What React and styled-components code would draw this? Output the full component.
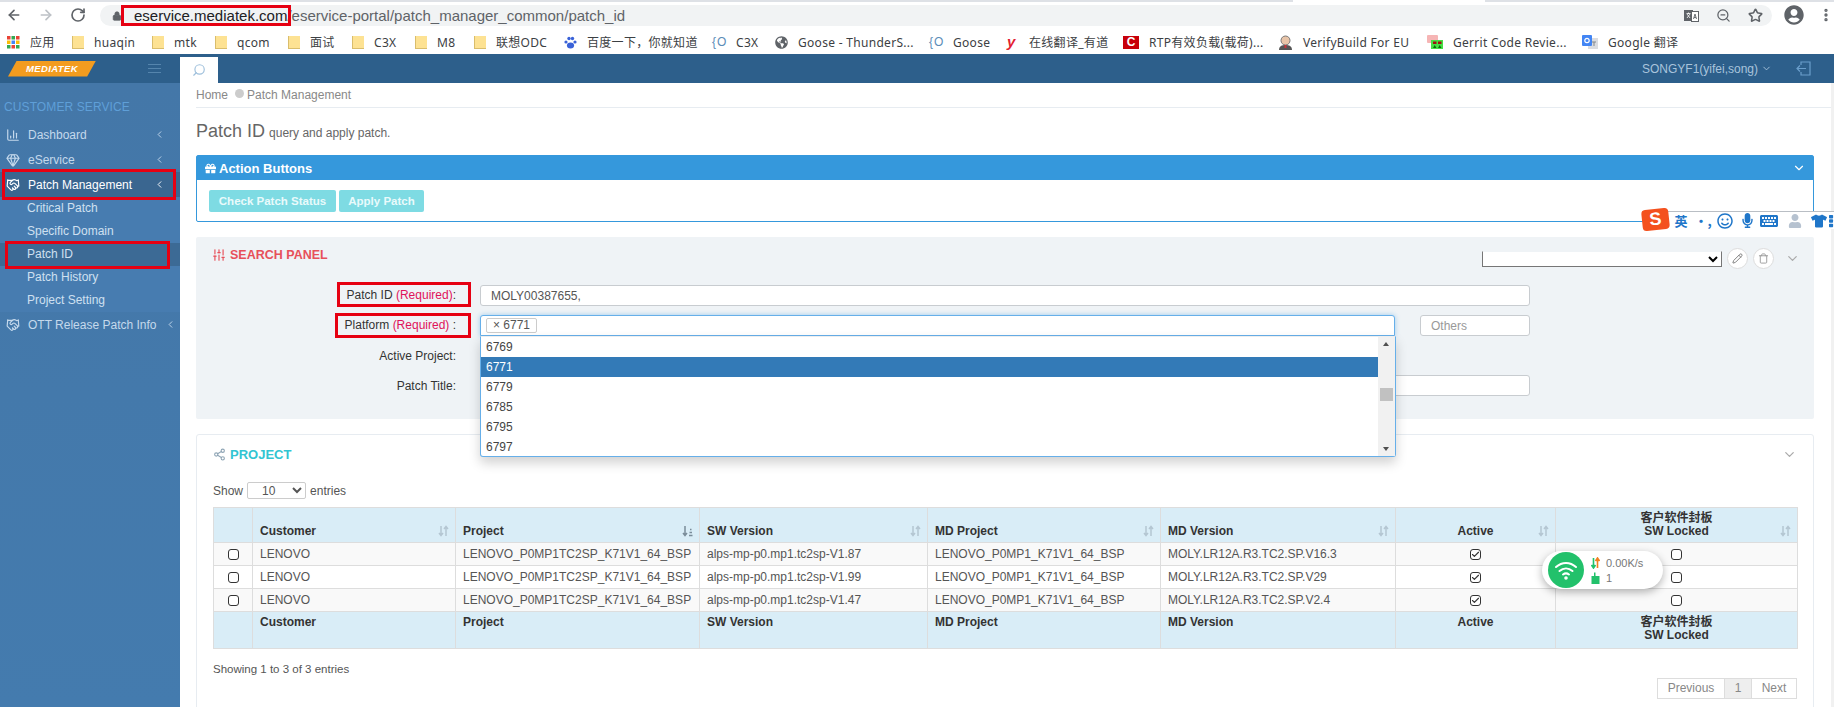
import React from 'react';
import styled, { createGlobalStyle, css } from 'styled-components';
import {
  ArrowLeft, ArrowRight, RotateCw, Lock, Star, ZoomOut,
  EllipsisVertical, Search, ChevronDown, ChevronLeft, ChartColumn, Gem, Handshake,
  SlidersVertical, Share2, Pencil, Trash, Check,
} from 'lucide-react';
import { FaGift, FaGlobeAmericas, FaRegSmile, FaMicrophone, FaKeyboard, FaUser, FaTshirt, FaTh, FaUserCircle } from 'react-icons/fa';

const GlobalStyle = createGlobalStyle`
  html, body { margin: 0; padding: 0; background: #fff; }
  body { font-family: "Liberation Sans", Arial, "Noto Sans CJK SC", sans-serif; font-size: 12px; color: #333; }
  * { box-sizing: border-box; }
`;

const redBox = css`
  position: relative;
  &::after {
    content: '';
    position: absolute;
    inset: ${({ $inset }) => $inset};
    border: 3px solid #e60012;
    pointer-events: none;
  }
`;

const Page = styled.div`
  position: relative;
  display: flex;
  flex-direction: column;
  width: 1834px;
  height: 707px;
  overflow: hidden;
`;

/* browser chrome */
const TabStrip = styled.div`
  flex: 0 0 2px;
  display: flex;
  background: #dee1e6;
`;

const ActiveTab = styled.div`
  width: 192px;
  margin-left: 1293px;
  background: #fff;
`;

const Toolbar = styled.div`
  flex: 0 0 28px;
  display: flex;
  align-items: flex-start;
  padding: 3px 0 0 6px;
`;

const NavIcons = styled.div`
  display: flex;
  gap: 16px;
  padding-top: 2px;
  svg { display: block; }
`;

const AddressBar = styled.div`
  display: flex;
  align-items: center;
  width: 1675px;
  height: 21px;
  margin-left: 14px;
  padding: 0 9px 0 12px;
  border-radius: 11px;
  background: #f1f3f4;
`;

const Url = styled.div`
  flex: 1;
  margin-left: 12px;
  font-size: 15px;
  color: #5f6368;
  white-space: nowrap;
`;

const Domain = styled.span`
  ${redBox}
  display: inline-block;
  color: #202124;
`;

const BarIcons = styled.div`
  display: flex;
  gap: 17px;
  align-items: center;
`;

const Profile = styled.div`
  display: flex;
  align-items: center;
  gap: 14px;
  margin-left: 12px;
`;

const Bookmarks = styled.div`
  flex: 0 0 24px;
  display: flex;
  align-items: center;
  gap: 18px;
  padding-left: 7px;
`;

const Bookmark = styled.div`
  display: flex;
  align-items: center;
  gap: 10px;
`;

const BookmarkLabel = styled.span`
  width: ${({ $w }) => $w}px;
  font-family: "Noto Sans", "Noto Sans CJK SC", sans-serif;
  font-size: 12px;
  letter-spacing: 0.3px;
  color: #3c4043;
  white-space: nowrap;
`;

const Folder = styled.span`
  width: 12px;
  height: 13px;
  background: #fde293;
  border-left: 1px solid #d9bd6c;
  border-bottom: 1px solid #d9bd6c;
`;

const FavBrace = styled.span`
  width: 14px;
  font-size: 12px;
  letter-spacing: 1px;
  color: #5b8db8;
  white-space: nowrap;
`;

const FavYoudao = styled.span`
  width: 12px;
  font-size: 15px;
  line-height: 14px;
  font-weight: 700;
  font-style: italic;
  color: #e3212f;
`;

const FavRed = styled.span`
  width: 16px;
  height: 13px;
  font-size: 12px;
  line-height: 13px;
  font-weight: 700;
  text-align: center;
  color: #fff;
  background: #c8000a;
`;

/* app header */
const TopBar = styled.header`
  flex: 0 0 29px;
  display: flex;
  align-items: flex-end;
  background: #2d5f8b;
`;

const LogoArea = styled.div`
  display: flex;
  align-items: center;
  justify-content: space-between;
  width: 180px;
  height: 100%;
  padding: 0 19px 0 8px;
`;

const Logo = styled.div`
  width: 88px;
  height: 16px;
  font-size: 9.5px;
  line-height: 16px;
  font-weight: 700;
  font-style: italic;
  letter-spacing: 0.4px;
  text-align: center;
  color: #fff;
  background: #f39c1f;
  clip-path: polygon(10% 0, 100% 0, 90% 100%, 0 100%);
`;

const Burger = styled.div`
  width: 13px;
  height: 9px;
  border-top: 1px solid #5585ad;
  border-bottom: 1px solid #5585ad;
  background: linear-gradient(#5585ad, #5585ad) center / 100% 1px no-repeat;
`;

const SearchTab = styled.div`
  display: flex;
  align-items: center;
  justify-content: center;
  width: 38px;
  height: 26px;
  background: #fff;
  svg { transform: scaleX(-1); }
`;

const UserMenu = styled.div`
  display: flex;
  align-items: center;
  align-self: center;
  margin-left: auto;
  padding-right: 23px;
  font-size: 12px;
  color: #a9c4dc;
`;

const LogoutBox = styled.span`
  display: flex;
  margin-left: 24px;
`;

const Body = styled.div`
  flex: 1;
  display: flex;
  min-height: 0;
`;

/* sidebar */
const Sidebar = styled.nav`
  flex: 0 0 180px;
  min-width: 0;
  background: linear-gradient(#4477a8, #447bae);
`;

const SideHeading = styled.div`
  height: 39px;
  padding: 16px 0 0 4px;
  font-size: 12px;
  line-height: 17px;
  letter-spacing: 0.1px;
  color: #5f9fd8;
`;

const NavRow = styled.div`
  ${({ $inset }) => $inset && redBox}
  display: flex;
  align-items: center;
  gap: 8px;
  height: 25px;
  padding-left: 6px;
  font-size: 12px;
  white-space: nowrap;
  color: ${({ $active }) => ($active ? '#fff' : '#c5d9ec')};
  background: ${({ $active }) => ($active ? '#3a6690' : 'transparent')};
`;

const NavIcon = styled.span`
  display: flex;
  width: 14px;
`;

const NavArrow = styled.span`
  display: flex;
  margin-left: auto;
  margin-right: 15px;
`;

const SubMenu = styled.div`
  background: #477cb0;
`;

const SubItem = styled.div`
  ${({ $inset }) => $inset && redBox}
  height: 23px;
  padding-left: 27px;
  font-size: 12px;
  line-height: 23px;
  color: #cfe0f0;
  background: ${({ $active }) => ($active ? '#3c6a95' : 'transparent')};
`;

/* content */
const Main = styled.main`
  flex: 1;
  min-width: 0;
  padding: 0 17px 0 16px;
  border-right: 3px solid #f1f1f1;
`;

const Breadcrumb = styled.div`
  display: flex;
  align-items: center;
  height: 25px;
  margin-right: -17px;
  border-bottom: 1px solid #e7ecf1;
  font-size: 12px;
  color: #888;
`;

const CrumbDot = styled.span`
  width: 9px;
  height: 9px;
  margin: -4px 3px 0 7px;
  border-radius: 50%;
  background: #ccc;
`;

const TitleRow = styled.div`
  display: flex;
  align-items: baseline;
  gap: 4px;
  height: 47px;
  padding-top: 13px;
`;

const Title = styled.h1`
  margin: 0;
  font-size: 18px;
  font-weight: 400;
  color: #666;
`;

const TitleNote = styled.small`
  font-size: 12px;
  color: #666;
`;

const ActionPanel = styled.section`
  height: 67px;
  border: 1px solid #3598dc;
  border-radius: 2px;
`;

const ActionHead = styled.div`
  display: flex;
  align-items: center;
  gap: 3px;
  height: 24px;
  padding-left: 8px;
  font-size: 13px;
  font-weight: 700;
  color: #fff;
  background: #3598dc;
`;

const HeadChevron = styled.span`
  display: flex;
  margin-left: auto;
  margin-right: ${({ $right }) => $right}px;
`;

const ActionBody = styled.div`
  display: flex;
  gap: 3px;
  padding: 10px 12px;
`;

const ActionButton = styled.button`
  width: ${({ $w }) => $w}px;
  height: 22px;
  padding: 0;
  border: 0;
  border-radius: 2px;
  font-family: inherit;
  font-size: 11.5px;
  font-weight: 700;
  color: #e9fafb;
  background: #7edbe3;
`;

const SearchPanel = styled.section`
  height: 182px;
  margin-top: 15px;
  border-radius: 2px;
  background: #eff3f6;
`;

const SearchHead = styled.div`
  display: flex;
  align-items: flex-start;
  height: 48px;
  padding: 11px 14px 0 16px;
`;

const PanelTitle = styled.div`
  display: flex;
  align-items: center;
  gap: 4px;
  height: 14px;
  font-size: ${({ $size = 12 }) => $size}px;
  font-weight: 700;
  color: ${({ $color }) => $color};
`;

const PresetTools = styled.div`
  display: flex;
  align-items: center;
  gap: 5px;
  margin-left: auto;
`;

const PresetSelect = styled.select`
  width: 240px;
  height: 16px;
  padding: 0;
  border: 1px solid #767676;
  border-top-color: #eff3f6;
  border-radius: 0;
  background: #fff;
`;

const RoundButton = styled.span`
  display: flex;
  align-items: center;
  justify-content: center;
  width: 21px;
  height: 21px;
  border: 1px solid #ddd;
  border-radius: 50%;
  background: #fff;
`;

const CollapseIcon = styled.span`
  display: flex;
  margin-left: 6px;
`;

const FormGrid = styled.div`
  display: flex;
  flex-direction: column;
  gap: 9px;
`;

const FormRow = styled.div`
  display: flex;
  align-items: center;
  height: 21px;
`;

const FieldLabel = styled.div`
  width: 260px;
  margin-right: 24px;
  font-size: 12px;
  text-align: right;
  color: #333;
`;

const LabelText = styled.span`
  ${({ $inset }) => $inset && redBox}
  display: inline-block;
  line-height: 21px;
`;

const Required = styled.span`
  color: #e0125a;
`;

const TextInput = styled.input`
  width: ${({ $w }) => $w}px;
  height: 21px;
  margin-left: ${({ $left = 0 }) => $left}px;
  padding: 0 10px;
  border: 1px solid #c8ccd0;
  border-radius: 3px;
  outline: none;
  font-family: inherit;
  font-size: 12px;
  color: #555;
  background: #fff;
  &::placeholder { color: #999; }
`;

const SelectBox = styled.div`
  position: relative;
  display: flex;
  align-items: center;
  width: 915px;
  height: 21px;
  padding-left: 5px;
  border: 1px solid #66afe9;
  border-radius: 3px 3px 0 0;
  background: #fff;
  box-shadow: 0 0 5px rgba(102, 175, 233, 0.6);
`;

const Tag = styled.span`
  padding: 0 6px;
  height: 15px;
  border: 1px solid #ccc;
  border-radius: 2px;
  font-size: 12px;
  line-height: 13px;
  color: #555;
  background: #fff;
`;

const Dropdown = styled.div`
  position: absolute;
  z-index: 5;
  top: 20px;
  left: -1px;
  display: flex;
  width: 916px;
  height: 121px;
  border: 1px solid #66afe9;
  border-top: 1px solid #eee;
  border-radius: 0 0 3px 3px;
  background: #fff;
  box-shadow: 0 6px 12px rgba(0, 0, 0, 0.18);
`;

const OptionList = styled.div`
  flex: 1;
  overflow: hidden;
`;

const Option = styled.div`
  height: 20px;
  padding-left: 5px;
  font-size: 12px;
  line-height: 20px;
  color: ${({ $selected }) => ($selected ? '#fff' : '#444')};
  background: ${({ $selected }) => ($selected ? '#337ab7' : 'transparent')};
`;

const FakeScrollbar = styled.div`
  position: relative;
  flex: 0 0 17px;
  background: #f1f1f1;
`;

const ScrollArrow = styled.span`
  position: absolute;
  left: 5px;
  ${({ $down }) => ($down ? 'bottom: 5px; border-top: 4px solid #505050;' : 'top: 5px; border-bottom: 4px solid #505050;')}
  border-left: 3px solid transparent;
  border-right: 3px solid transparent;
`;

const ScrollThumb = styled.span`
  position: absolute;
  top: 51px;
  left: 2px;
  width: 13px;
  height: 13px;
  background: #c1c1c1;
`;

const ProjectPanel = styled.section`
  margin-top: 15px;
  height: 290px;
  padding: 0 16px;
  border: 1px solid #e7ecf1;
  border-radius: 3px;
`;

const ProjectHead = styled.div`
  display: flex;
  align-items: center;
  height: 38px;
`;

const LengthRow = styled.div`
  display: flex;
  align-items: center;
  gap: 4px;
  height: 17px;
  margin: 9px 0 8px;
  font-size: 12px;
  color: #555;
`;

const LengthSelect = styled.select`
  width: 59px;
  height: 17px;
  padding: 0 0 0 10px;
  border: 1px solid #ccc;
  border-radius: 2px;
  font-family: inherit;
  font-size: 12px;
  color: #555;
  background: #fff;
`;

const Table = styled.table`
  width: 1584px;
  table-layout: fixed;
  border-collapse: collapse;
  font-size: 12px;
`;

const HeadCell = styled.th`
  position: relative;
  height: ${({ $foot }) => ($foot ? 37 : 35)}px;
  padding: ${({ $foot }) => ($foot ? '4px 7px 0' : '0 7px 4px')};
  border: 1px solid #ddd;
  vertical-align: ${({ $foot }) => ($foot ? 'top' : 'bottom')};
  font-size: 12px;
  line-height: 13px;
  text-align: ${({ $center }) => ($center ? 'center' : 'left')};
  color: #333;
  background: #d9edf7;
`;

const SortMark = styled.span`
  position: absolute;
  right: 6px;
  bottom: 5px;
  display: flex;
`;

const Row = styled.tr`
  height: 23px;
  background: ${({ $odd }) => ($odd ? '#f9f9f9' : '#fff')};
`;

const Cell = styled.td`
  padding: 0 7px;
  border: 1px solid #ddd;
  color: #555;
  text-align: ${({ $center }) => ($center ? 'center' : 'left')};
  white-space: nowrap;
  overflow: hidden;
`;

const Tick = styled.span`
  display: inline-flex;
  align-items: center;
  justify-content: center;
  width: 11px;
  height: 11px;
  vertical-align: middle;
  border: 1.5px solid #333;
  border-radius: 3px;
  background: #fff;
`;

const TableInfo = styled.div`
  height: 15px;
  margin-top: 14px;
  font-size: 11.5px;
  color: #555;
`;

const Pager = styled.div`
  display: flex;
  justify-content: flex-end;
`;

const PageLink = styled.span`
  width: ${({ $w }) => $w}px;
  height: 21px;
  border: 1px solid #ddd;
  margin-left: -1px;
  font-size: 12px;
  line-height: 19px;
  text-align: center;
  color: #888;
  background: ${({ $current }) => ($current ? '#eee' : '#fff')};
`;

/* floating windows widgets */
const ImeBar = styled.div`
  position: absolute;
  z-index: 10;
  top: 211px;
  left: 1665px;
  display: flex;
  align-items: center;
  width: 169px;
  height: 18px;
  padding-left: 5px;
  border-top: 1px solid #b9bec4;
  background: #fff;
  color: #1f76c9;
`;

const ImeSlot = styled.span`
  flex: 0 0 ${({ $w = 22 }) => $w}px;
  display: flex;
  justify-content: center;
`;

const ImeLogo = styled.span`
  position: absolute;
  z-index: 11;
  top: 209px;
  left: 1642px;
  width: 27px;
  height: 21px;
  border-radius: 4px;
  font-size: 18px;
  line-height: 21px;
  font-weight: 700;
  text-align: center;
  color: #fff;
  background: #f4511e;
  transform: rotate(-6deg);
`;

const ImeText = styled.span`
  font-size: 13px;
  font-weight: 700;
  line-height: 16px;
  font-family: "Noto Sans CJK SC", sans-serif;
  white-space: nowrap;
`;

const NetWidget = styled.div`
  position: absolute;
  z-index: 8;
  top: 551px;
  left: 1542px;
  display: flex;
  align-items: center;
  gap: 7px;
  width: 121px;
  height: 38px;
  padding-left: 6px;
  border-radius: 19px;
  background: #fff;
  box-shadow: 0 3px 8px rgba(0, 0, 0, 0.3);
`;

const WifiDisc = styled.span`
  display: flex;
  align-items: center;
  justify-content: center;
  width: 36px;
  height: 36px;
  border-radius: 50%;
  background: #22c16b;
`;

const NetStats = styled.div`
  display: flex;
  flex-direction: column;
  gap: 3px;
  font-size: 11px;
  line-height: 12px;
  color: #777;
`;

const NetLine = styled.div`
  display: flex;
  align-items: center;
  gap: 6px;
`;

const AppsIcon = () => (
  <svg width="13" height="13" viewBox="0 0 13 13">
    {[0, 1, 2].flatMap((r) =>
      [0, 1, 2].map((c) => (
        <rect key={`${r}${c}`} x={c * 4.5} y={r * 4.5} width="3.5" height="3.5"
          fill={['#ea4335', '#fbbc05', '#34a853', '#4285f4'][(r + c * 2) % 4]} />
      ))
    )}
  </svg>
);

const PawIcon = () => (
  <svg width="13" height="13" viewBox="0 0 13 13" fill="#3a62d8">
    <circle cx="2" cy="6" r="1.6" /><circle cx="5" cy="2.5" r="1.7" /><circle cx="8.5" cy="2.5" r="1.7" />
    <circle cx="11" cy="6" r="1.6" /><ellipse cx="6.5" cy="9.5" rx="3.6" ry="3" />
  </svg>
);

const JenkinsIcon = () => (
  <svg width="15" height="15" viewBox="0 0 15 15">
    <path d="M1 15c0-4 3-5 6.500-5s6.500 1 6.500 5z" fill="#555" />
    <circle cx="7.500" cy="5.500" r="4.500" fill="#e8c4a8" stroke="#777" />
    <rect x="6.500" y="10" width="2" height="3" fill="#c8333a" />
  </svg>
);

const GerritIcon = () => (
  <svg width="16" height="14" viewBox="0 0 16 14">
    <rect x="0" y="0" width="11" height="8" rx="1" fill="#f6b5b5" />
    <rect x="4" y="5" width="12" height="9" fill="#44e044" />
    <rect x="6" y="6.500" width="3.500" height="2.500" fill="#a01010" />
    <rect x="11" y="6.500" width="3.500" height="2.500" fill="#a01010" />
    <path d="M6 13l1.700-3 1.800 3zM11 13l1.700-3 1.800 3z" fill="#0a6a0a" />
  </svg>
);

const TranslateIcon = () => (
  <svg width="16" height="14" viewBox="0 0 16 14">
    <rect x="6" y="3" width="10" height="11" fill="#dadce0" />
    <rect x="0" y="0" width="10" height="11" rx="1" fill="#4285f4" />
    <circle cx="5" cy="5.500" r="2.200" fill="none" stroke="#fff" strokeWidth="1.200" />
    <path d="M10 7h4M12 7v4" stroke="#80868b" />
  </svg>
);

const PageTranslateIcon = () => (
  <svg width="15" height="14" viewBox="0 0 15 14">
    <rect x="0.500" y="1.500" width="8" height="10" fill="#5f6368" stroke="#5f6368" />
    <rect x="7.500" y="2.500" width="7" height="10" fill="#fff" stroke="#5f6368" />
    <path d="M2.500 4.500h4M4.500 3.500v1.500M3 9l3-4M6 9L3 5" stroke="#fff" strokeWidth="0.800" fill="none" />
    <path d="M9.500 10l1.500-5 1.500 5M10 8.500h2" stroke="#5f6368" strokeWidth="0.900" fill="none" />
  </svg>
);

const LogoutIcon = () => (
  <svg width="15" height="15" viewBox="0 0 15 15" fill="none" stroke="#6a9ecb" strokeWidth="1.200">
    <path d="M5 4V1h9v13H5v-3M10 7.500H1M4 4.500l-3 3 3 3" />
  </svg>
);

const SortIcon = ({ active }) => (
  <svg width="11" height="12" viewBox="0 0 11 12" fill="none" stroke={active ? '#7a8c99' : '#b4c6d2'} strokeWidth="1.500">
    <path d="M3 1v9M1 8l2 2.500L5 8" />
    {active ? <path d="M7 10.500h3.500M7.500 7.500h2.500M8 4.500h1.500" /> : <path d="M8 11V2M6 4l2-2.500L10 4" />}
  </svg>
);

const WifiIcon = () => (
  <svg width="24" height="20" viewBox="0 0 24 20" fill="none" stroke="#fff" strokeWidth="2" strokeLinecap="round">
    <path d="M2 7c6-5.500 14-5.500 20 0M5.500 11c4-3.500 9-3.500 13 0M9 14.500c2-1.500 4-1.500 6 0" />
    <circle cx="12" cy="18" r="0.800" fill="#fff" />
  </svg>
);

const SpeedIcon = () => (
  <svg width="9" height="12" viewBox="0 0 9 12" fill="none" strokeWidth="1.600">
    <path d="M2.500 1v9M0.500 8l2 3 2-3" stroke="#22c16b" />
    <path d="M6.500 11V2M4.500 4l2-3 2 3" stroke="#f08020" />
  </svg>
);

const DeviceIcon = () => (
  <svg width="9" height="12" viewBox="0 0 9 12" fill="#22c16b">
    <rect x="0.500" y="4" width="8" height="8" />
    <rect x="3" y="0.500" width="1.500" height="4" />
  </svg>
);

const bookmarks = [
  { icon: <AppsIcon />, label: '应用', w: 24 },
  { icon: <Folder />, label: 'huaqin', w: 40 },
  { icon: <Folder />, label: 'mtk', w: 23 },
  { icon: <Folder />, label: 'qcom', w: 33 },
  { icon: <Folder />, label: '面试', w: 24 },
  { icon: <Folder />, label: 'C3X', w: 23 },
  { icon: <Folder />, label: 'M8', w: 19 },
  { icon: <Folder />, label: '联想ODC', w: 50 },
  { icon: <PawIcon />, label: '百度一下，你就知道', w: 107 },
  { icon: <FavBrace>{'{O'}</FavBrace>, label: 'C3X', w: 21 },
  { icon: <FaGlobeAmericas size={13} color="#5f6368" />, label: 'Goose - ThunderS...', w: 113 },
  { icon: <FavBrace>{'{O'}</FavBrace>, label: 'Goose', w: 36 },
  { icon: <FavYoudao>y</FavYoudao>, label: '在线翻译_有道', w: 76 },
  { icon: <FavRed>C</FavRed>, label: 'RTP有效负载(载荷)...', w: 111 },
  { icon: <JenkinsIcon />, label: 'VerifyBuild  For  EU', w: 106 },
  { icon: <GerritIcon />, label: 'Gerrit Code Revie...', w: 111 },
  { icon: <TranslateIcon />, label: 'Google 翻译', w: 70 },
];

const columns = [
  { w: 39 },
  { w: 203, label: 'Customer', sort: true },
  { w: 244, label: 'Project', sort: true, active: true },
  { w: 228, label: 'SW Version', sort: true },
  { w: 233, label: 'MD Project', sort: true },
  { w: 235, label: 'MD Version', sort: true },
  { w: 160, label: 'Active', sort: true, center: true },
  { w: 242, label: '客户软件封板', sub: 'SW Locked', sort: true, center: true },
];

const rows = [
  { sw: 'alps-mp-p0.mp1.tc2sp-V1.87', md: 'MOLY.LR12A.R3.TC2.SP.V16.3' },
  { sw: 'alps-mp-p0.mp1.tc2sp-V1.99', md: 'MOLY.LR12A.R3.TC2.SP.V29' },
  { sw: 'alps-mp-p0.mp1.tc2sp-V1.47', md: 'MOLY.LR12A.R3.TC2.SP.V2.4' },
];

const platforms = ['6769', '6771', '6779', '6785', '6795', '6797'];

function CheckBox({ checked }) {
  return <Tick>{checked && <Check size={11} strokeWidth={3} color="#333" />}</Tick>;
}

function HeaderCells({ foot }) {
  return columns.map((col, i) => (
    <HeadCell key={i} $foot={foot} $center={col.center} style={{ width: col.w }}>
      {col.label}
      {col.sub && <br />}
      {col.sub}
      {!foot && col.sort && <SortMark><SortIcon active={col.active} /></SortMark>}
    </HeadCell>
  ));
}

export default function App() {
  return (
    <Page>
      <GlobalStyle />
      <TabStrip><ActiveTab /></TabStrip>
      <Toolbar>
        <NavIcons>
          <ArrowLeft size={16} color="#5f6368" strokeWidth={2.5} />
          <ArrowRight size={16} color="#bdc1c6" strokeWidth={2.5} />
          <RotateCw size={16} color="#5f6368" strokeWidth={2.5} />
        </NavIcons>
        <AddressBar>
          <Lock size={10} color="#5f6368" fill="#5f6368" />
          <Url>
            <Domain $inset="-2px -4px -2px -13px">eservice.mediatek.com</Domain>
            /eservice-portal/patch_manager_common/patch_id
          </Url>
          <BarIcons>
            <PageTranslateIcon />
            <ZoomOut size={15} color="#5f6368" />
            <Star size={15} color="#5f6368" strokeWidth={2.5} />
          </BarIcons>
        </AddressBar>
        <Profile>
          <FaUserCircle size={20} color="#5f6368" />
          <EllipsisVertical size={16} color="#5f6368" strokeWidth={3} />
        </Profile>
      </Toolbar>
      <Bookmarks>
        {bookmarks.map((b, i) => (
          <Bookmark key={i}>
            {b.icon}
            <BookmarkLabel $w={b.w}>{b.label}</BookmarkLabel>
          </Bookmark>
        ))}
      </Bookmarks>

      <TopBar>
        <LogoArea>
          <Logo>MEDIATEK</Logo>
          <Burger />
        </LogoArea>
        <SearchTab><Search size={14} color="#9fc0dc" /></SearchTab>
        <UserMenu>
          SONGYF1(yifei,song)
          <ChevronDown size={11} style={{ marginLeft: 3 }} />
          <LogoutBox><LogoutIcon /></LogoutBox>
        </UserMenu>
      </TopBar>

      <Body>
        <Sidebar>
          <SideHeading>CUSTOMER SERVICE</SideHeading>
          <NavRow>
            <NavIcon><ChartColumn size={14} /></NavIcon>Dashboard
            <NavArrow><ChevronLeft size={11} /></NavArrow>
          </NavRow>
          <NavRow>
            <NavIcon><Gem size={14} /></NavIcon>eService
            <NavArrow><ChevronLeft size={11} /></NavArrow>
          </NavRow>
          <NavRow $active $inset="-3px 4px -3px 2px">
            <NavIcon><Handshake size={14} /></NavIcon>Patch Management
            <NavArrow><ChevronLeft size={11} /></NavArrow>
          </NavRow>
          <SubMenu>
            <SubItem>Critical Patch</SubItem>
            <SubItem>Specific Domain</SubItem>
            <SubItem $active $inset="-2px 10px -3px 5px">Patch ID</SubItem>
            <SubItem>Patch History</SubItem>
            <SubItem>Project Setting</SubItem>
          </SubMenu>
          <NavRow>
            <NavIcon><Handshake size={14} /></NavIcon>OTT Release Patch Info
            <NavArrow><ChevronLeft size={11} /></NavArrow>
          </NavRow>
        </Sidebar>

        <Main>
          <Breadcrumb>Home<CrumbDot />Patch Management</Breadcrumb>
          <TitleRow>
            <Title>Patch ID</Title>
            <TitleNote>query and apply patch.</TitleNote>
          </TitleRow>

          <ActionPanel>
            <ActionHead>
              <FaGift size={11} /> Action Buttons
              <HeadChevron $right={7}><ChevronDown size={14} /></HeadChevron>
            </ActionHead>
            <ActionBody>
              <ActionButton $w={127}>Check Patch Status</ActionButton>
              <ActionButton $w={85}>Apply Patch</ActionButton>
            </ActionBody>
          </ActionPanel>

          <SearchPanel>
            <SearchHead>
              <PanelTitle $color="#e7505a" $size={12.5}>
                <SlidersVertical size={14} /> SEARCH PANEL
              </PanelTitle>
              <PresetTools>
                <PresetSelect />
                <RoundButton><Pencil size={11} color="#777" /></RoundButton>
                <RoundButton><Trash size={11} color="#999" /></RoundButton>
                <CollapseIcon><ChevronDown size={15} color="#aaa" /></CollapseIcon>
              </PresetTools>
            </SearchHead>
            <FormGrid>
              <FormRow>
                <FieldLabel>
                  <LabelText $inset="-3px -15px -1px -10px">Patch ID <Required>(Required)</Required>:</LabelText>
                </FieldLabel>
                <TextInput $w={1050} defaultValue="MOLY00387655," />
              </FormRow>
              <FormRow>
                <FieldLabel>
                  <LabelText $inset="-2px -15px -2px -10px">Platform <Required>(Required)</Required> :</LabelText>
                </FieldLabel>
                <SelectBox>
                  <Tag>× 6771</Tag>
                  <Dropdown>
                    <OptionList>
                      {platforms.map((p) => (
                        <Option key={p} $selected={p === '6771'}>{p}</Option>
                      ))}
                    </OptionList>
                    <FakeScrollbar>
                      <ScrollArrow />
                      <ScrollThumb />
                      <ScrollArrow $down />
                    </FakeScrollbar>
                  </Dropdown>
                </SelectBox>
                <TextInput $w={110} $left={25} placeholder="Others" />
              </FormRow>
              <FormRow>
                <FieldLabel>Active Project:</FieldLabel>
              </FormRow>
              <FormRow>
                <FieldLabel>Patch Title:</FieldLabel>
                <TextInput $w={1050} />
              </FormRow>
            </FormGrid>
          </SearchPanel>

          <ProjectPanel>
            <ProjectHead>
              <PanelTitle $color="#32c5d2" $size={13}>
                <Share2 size={13} color="#8fa5b5" /> PROJECT
              </PanelTitle>
              <HeadChevron $right={0}><ChevronDown size={15} color="#aaa" /></HeadChevron>
            </ProjectHead>
            <LengthRow>
              Show
              <LengthSelect defaultValue="10"><option value="10">10</option></LengthSelect>
              entries
            </LengthRow>
            <Table>
              <thead><tr><HeaderCells /></tr></thead>
              <tbody>
                {rows.map((r, i) => (
                  <Row key={i} $odd={i % 2 === 0}>
                    <Cell $center><CheckBox /></Cell>
                    <Cell>LENOVO</Cell>
                    <Cell>LENOVO_P0MP1TC2SP_K71V1_64_BSP</Cell>
                    <Cell>{r.sw}</Cell>
                    <Cell>LENOVO_P0MP1_K71V1_64_BSP</Cell>
                    <Cell>{r.md}</Cell>
                    <Cell $center><CheckBox checked /></Cell>
                    <Cell $center><CheckBox /></Cell>
                  </Row>
                ))}
              </tbody>
              <tfoot><tr><HeaderCells foot /></tr></tfoot>
            </Table>
            <TableInfo>Showing 1 to 3 of 3 entries</TableInfo>
            <Pager>
              <PageLink $w={68}>Previous</PageLink>
              <PageLink $w={28} $current>1</PageLink>
              <PageLink $w={46}>Next</PageLink>
            </Pager>
          </ProjectPanel>
        </Main>
      </Body>

      <ImeLogo>S</ImeLogo>
      <ImeBar>
        <ImeSlot><ImeText>英</ImeText></ImeSlot>
        <ImeSlot><ImeText>•,</ImeText></ImeSlot>
        <ImeSlot><FaRegSmile size={16} /></ImeSlot>
        <ImeSlot><FaMicrophone size={15} /></ImeSlot>
        <ImeSlot><FaKeyboard size={18} /></ImeSlot>
        <ImeSlot $w={29}><FaUser size={14} color="#b6c2d0" /></ImeSlot>
        <ImeSlot $w={20}><FaTshirt size={16} /></ImeSlot>
        <ImeSlot $w={14}><FaTh size={14} /></ImeSlot>
      </ImeBar>

      <NetWidget>
        <WifiDisc><WifiIcon /></WifiDisc>
        <NetStats>
          <NetLine><SpeedIcon /> 0.00K/s</NetLine>
          <NetLine><DeviceIcon /> 1</NetLine>
        </NetStats>
      </NetWidget>
    </Page>
  );
}
